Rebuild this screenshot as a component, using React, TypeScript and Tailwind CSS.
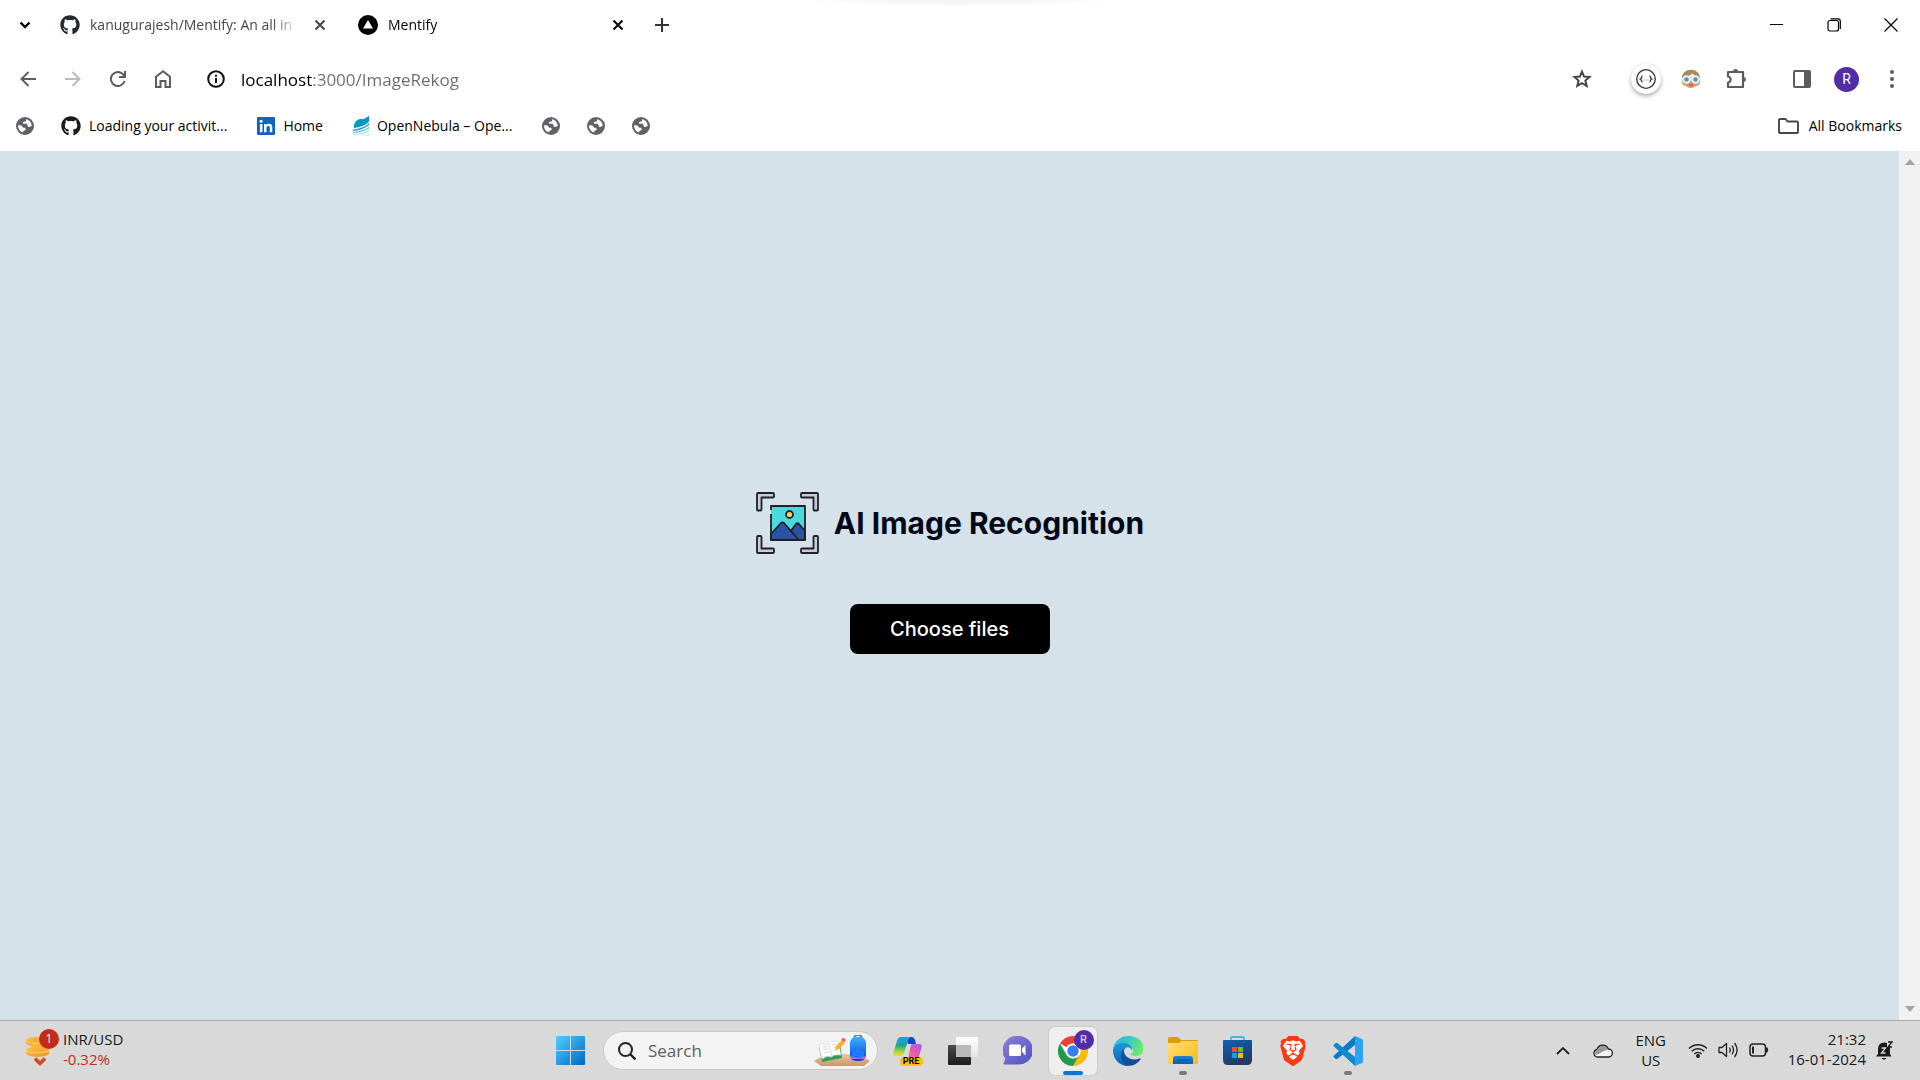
import type { ReactNode } from 'react'
import { FaGithub } from 'react-icons/fa'
import { SiBrave } from 'react-icons/si'

const uiFont = "font-['Segoe_UI','Open_Sans','Noto_Sans',sans-serif]"

function Globe() {
  return (
    <svg viewBox="0 0 18 18" className="size-[18px] shrink-0">
      <circle cx="9" cy="9" r="9" fill="#5f6368" />
      <path
        d="M10.2 2.2c-.4 1 .2 1.7-.7 2.3-1 .5-2.1.1-2.6 1-.4.8.5 1.3 1.4 1.3 1 0 2.3-.2 3 .6.6.8.1 1.9 1 2.3.9.5 1.9 0 3.4-.6.1-3.3-2.3-6.2-5.5-6.9zM2.1 8.3c-.4 3.4 1.8 6.4 5 7.3 0-1 .3-1.6 1.2-2 1-.4 1.6-.9 1.3-1.9-.3-1.1-1.5-.9-2.5-1.2-.9-.4-.8-1.5-1.7-1.9-1-.4-2.1-.3-3.3-.3z"
        fill="#fff"
      />
    </svg>
  )
}

function LinkedIn() {
  return (
    <svg viewBox="0 0 18 18" className="size-[18px] shrink-0">
      <rect width="18" height="18" rx="1" fill="#0a66c2" />
      <circle cx="4.1" cy="4.2" r="1.5" fill="#fff" />
      <path d="M2.9 7h2.5v8.3H2.9zM7 7h2.4v1.2c.5-.9 1.4-1.4 2.6-1.4 2.5 0 3.3 1.5 3.3 3.9v4.6h-2.5v-4.2c0-1.3-.3-2.1-1.5-2.1s-1.8.9-1.8 2.1v4.2H7z" fill="#fff" />
    </svg>
  )
}

function Nebula() {
  return (
    <svg viewBox="0 0 16 20" className="h-5 w-4 shrink-0">
      <path d="M1 9.500C2 5 6 2 10 3.500L16 0v5.500C12 9.500 7 11.500 1 12z" fill="#0098c3" />
      <path d="M0 13.500C6 13 12 11 16 7v2C12 12.500 6 14.600 0 15z" fill="#1fa6cc" />
      <path d="M0 16c6-.2 12-2 16-5v1.600C12 15 6 17 0 17.200z" fill="#5cc1dc" />
      <path d="M0 18c6 0 12-1.400 16-4v1.600C12 17.600 7 18.900 1 19z" fill="#a4dcec" />
      <path d="M6 19.800c4-.3 7-1.100 10-2.600v2.600z" fill="#cdebf5" />
    </svg>
  )
}

function RecognitionIcon() {
  return (
    <svg viewBox="0 0 64 64" className="size-16 shrink-0" fill="none" stroke="#1f2126" strokeWidth="1.800" strokeLinejoin="round">
      <g fill="#c9cbd6">
        <path d="M3 2h15a1 1 0 0 1 1 1v2.500a1 1 0 0 1-1 1H6.500v12a1 1 0 0 1-1 1h-2.500a1 1 0 0 1-1-1V3a1 1 0 0 1 1-1z" />
        <path d="M62 2H47a1 1 0 0 0-1 1v2.500a1 1 0 0 0 1 1h11.500v12a1 1 0 0 0 1 1H62a1 1 0 0 0 1-1V3a1 1 0 0 0-1-1z" />
        <path d="M3 62h15a1 1 0 0 0 1-1v-2.500a1 1 0 0 0-1-1H6.500V46a1 1 0 0 0-1-1H3a1 1 0 0 0-1 1v15a1 1 0 0 0 1 1z" />
        <path d="M62 62H47a1 1 0 0 1-1-1v-2.500a1 1 0 0 1 1-1h11.500V46a1 1 0 0 1 1-1H62a1 1 0 0 1 1 1v15a1 1 0 0 1-1 1z" />
      </g>
      <rect x="16" y="15" width="34" height="34" rx="1" fill="#4cd9dc" stroke="none" />
      <path d="m16 43 10-11q1.500-1.200 3 0l7 8 5-7q1.500-1.500 3 0l6 7v9H16z" fill="#2a52a5" />
      <path d="m35 39 8 9" />
      <path d="M16 19v-4h34v34H16V23" />
      <circle cx="34.500" cy="23.500" r="3.500" fill="#f8d25c" />
    </svg>
  )
}

function IconButton({ label, className = 'w-[45px]', children }: { label: string; className?: string; children: ReactNode }) {
  return (
    <button type="button" aria-label={label} className={`flex h-9 shrink-0 items-center justify-center ${className}`}>
      {children}
    </button>
  )
}

function CloseIcon() {
  return (
    <svg viewBox="0 0 12 12" className="size-3" stroke="currentColor" strokeWidth="2" fill="none">
      <path d="m1.500 1.500 9 9M10.500 1.500l-9 9" />
    </svg>
  )
}

function Tab({ icon, title, active }: { icon: ReactNode; title: string; active?: boolean }) {
  return (
    <div className={`flex w-[298px] items-center pr-[18px] pl-2.5 ${active ? 'text-black' : 'text-[#45474a]'}`}>
      {icon}
      <span className="mr-3 ml-2.5 min-w-0 flex-1 overflow-hidden text-sm leading-5 whitespace-nowrap [mask-image:linear-gradient(90deg,#000_88%,transparent)]">
        {title}
      </span>
      <IconButton label={`Close ${title}`} className="w-5">
        <CloseIcon />
      </IconButton>
    </div>
  )
}

function TabStrip() {
  return (
    <div className="relative flex h-[50px] items-center">
      <div className="absolute inset-x-0 top-0 mx-auto h-1.5 w-[300px] bg-[radial-gradient(ellipse_at_top,#f5f5f5_30%,transparent_75%)]" />
      <IconButton label="Search tabs" className="w-[50px]">
        <svg viewBox="0 0 12 8" className="h-2 w-3" fill="none" stroke="#000" strokeWidth="2.400">
          <path d="m1.500 1.500 4.500 4.500 4.500-4.500" />
        </svg>
      </IconButton>
      <Tab icon={<FaGithub className="size-5 shrink-0 text-[#24292f]" />} title="kanugurajesh/Mentify: An all in" />
      <Tab
        active
        icon={
          <svg viewBox="0 0 20 20" className="size-5 shrink-0">
            <circle cx="10" cy="10" r="10" />
            <path d="m10 5 5 8.500H5z" fill="#fff" />
          </svg>
        }
        title="Mentify"
      />
      <IconButton label="New tab" className="w-8">
        <svg viewBox="0 0 14 14" className="size-3.5" stroke="#333" strokeWidth="2">
          <path d="M7 0v14M0 7h14" />
        </svg>
      </IconButton>
      <div className="ml-auto flex pr-px">
        <IconButton label="Minimize" className="w-[57px]">
          <svg viewBox="0 0 14 14" className="size-3.5" stroke="#000">
            <path d="M0 6.500h13" />
          </svg>
        </IconButton>
        <IconButton label="Restore" className="w-[57px]">
          <svg viewBox="0 0 14 14" className="size-3.5" stroke="#000" strokeWidth="1.200" fill="none">
            <rect x="1" y="2.500" width="10.500" height="10.500" rx="2" />
            <path d="M3.500.8H11a2.300 2.300 0 0 1 2.300 2.300V11" />
          </svg>
        </IconButton>
        <IconButton label="Close" className="w-[57px]">
          <svg viewBox="0 0 14 14" className="size-3.5" stroke="#000" strokeWidth="1.200">
            <path d="m.5.5 13 13M13.500.5l-13 13" />
          </svg>
        </IconButton>
      </div>
    </div>
  )
}

function Toolbar() {
  return (
    <div className="flex h-[58px] items-center pr-1.5 pl-[5px]">
      <IconButton label="Back">
        <svg viewBox="0 0 16 16" className="size-4" fill="none" stroke="#5c5c5c" strokeWidth="1.900">
          <path d="M16 8H2M8.500 1 1.500 8l7 7" />
        </svg>
      </IconButton>
      <IconButton label="Forward">
        <svg viewBox="0 0 16 16" className="size-4" fill="none" stroke="#b9b9b9" strokeWidth="1.900">
          <path d="M0 8h14M7.500 1l7 7-7 7" />
        </svg>
      </IconButton>
      <IconButton label="Reload">
        <svg viewBox="0 0 16 16" className="size-4" fill="none" stroke="#5c5c5c" strokeWidth="2">
          <path d="M14.600 10A7 7 0 1 1 13 3.200L14.500 5M15 0v6H9" />
        </svg>
      </IconButton>
      <IconButton label="Home">
        <svg viewBox="0 0 16 18" className="h-[18px] w-4" fill="none" stroke="#5c5c5c" strokeWidth="2">
          <path d="M1 6.800 8 1.300l7 5.500V17h-4.500v-6h-5v6H1z" />
        </svg>
      </IconButton>
      <IconButton label="Site information" className="ml-4 w-[30px]">
        <svg viewBox="0 0 18 18" className="size-[18px]" fill="none" stroke="#111" strokeWidth="2">
          <circle cx="9" cy="9" r="7.800" />
          <path d="M9 8v5M9 4.800v2" />
        </svg>
      </IconButton>
      <input
        type="text"
        aria-label="Address"
        defaultValue="localhost:3000/ImageRekog"
        className="ml-2.5 h-9 min-w-0 flex-1 bg-[linear-gradient(90deg,#000_71px,#6b6b6b_71px)] bg-clip-text text-[17px] text-transparent outline-none"
      />
      <IconButton label="Bookmark this tab">
        <svg viewBox="0 0 20 20" className="size-5" fill="none" stroke="#474747" strokeWidth="2">
          <path d="m10 2.600 2.100 5 5.400.5-4.100 3.500 1.300 5.300L10 14.100l-4.700 2.800 1.300-5.300-4.100-3.500 5.400-.5z" />
        </svg>
      </IconButton>
      <IconButton label="JSON viewer" className="ml-[19px] w-[45px]">
        <span className="flex size-[30px] items-center justify-center rounded-full bg-white shadow-[0_2px_4px_rgba(0,0,0,0.35)]">
          <svg viewBox="0 0 20 20" className="size-5" fill="none" stroke="#333">
            <circle cx="10" cy="10" r="9.300" strokeWidth="1.300" />
            <path d="M6.500 7c-1.500 0-.5 2.500-2.200 3 1.700.5.700 3 2.200 3M13.500 7c1.500 0 .5 2.500 2.200 3-1.700.5-.7 3-2.200 3" strokeWidth="1.300" />
            <path d="M7.500 11h5" strokeDasharray="1 1" stroke="#888" />
          </svg>
        </span>
      </IconButton>
      <IconButton label="Extension">
        <svg viewBox="0 0 20 20" className="size-5">
          <path d="M1 8h18c.5 3 .5 6-1 8l-3 1q-2 2-5 2t-5-2l-3-1c-1.500-2-1.500-5-1-8z" fill="#dd9468" />
          <path d="M1 9C1 4 5 .8 10 .8S19 4 19 9c-3-1-6-2.500-7.500-4.500C9 7 5 8 1 9z" fill="#a98a5a" />
          <circle cx="5.500" cy="10.500" r="3.300" fill="#5b99aa" stroke="#e4f4fa" strokeWidth="2" />
          <circle cx="14.500" cy="10.500" r="3.300" fill="#5b99aa" stroke="#e4f4fa" strokeWidth="2" />
          <path d="M0 10h2M18 10h2M9 10h2" stroke="#e4f4fa" strokeWidth="2" />
          <path d="M8 16h4" stroke="#b5533f" strokeWidth="1.200" />
        </svg>
      </IconButton>
      <IconButton label="Extensions">
        <svg viewBox="0 0 22 22" className="size-[22px]">
          <path d="M3 4h15v15H3v-4.500c3.500-.4 3.500-5.600 0-6z" fill="none" stroke="#5c5c5c" strokeWidth="2.200" strokeLinejoin="round" />
          <path d="M8 3.500a2.500 2.500 0 0 1 5 0zM18.500 9a2.500 2.500 0 0 1 0 5z" fill="#5c5c5c" />
        </svg>
      </IconButton>
      <IconButton label="Side panel" className="ml-[21px] w-[45px]">
        <svg viewBox="0 0 18 18" className="size-[18px]">
          <rect x="1" y="1" width="16" height="16" rx="1" fill="none" stroke="#5c5c5c" strokeWidth="2" />
          <path d="M11 1h6v16h-6z" fill="#5c5c5c" />
        </svg>
      </IconButton>
      <IconButton label="Profile">
        <span className="flex size-[25px] items-center justify-center rounded-full bg-[#512da8] font-[Roboto,sans-serif] text-sm text-white">R</span>
      </IconButton>
      <IconButton label="Menu">
        <svg viewBox="0 0 4 18" className="h-[18px] w-1" fill="#5c5c5c">
          <circle cx="2" cy="2" r="2" />
          <circle cx="2" cy="9" r="2" />
          <circle cx="2" cy="16" r="2" />
        </svg>
      </IconButton>
    </div>
  )
}

function Bookmark({ icon, label, children }: { icon: ReactNode; label?: string; children?: ReactNode }) {
  return (
    <a href="#" aria-label={label} className={`flex items-center gap-2 whitespace-nowrap text-black ${children ? 'pr-[3px]' : ''}`}>
      {icon}
      {children}
    </a>
  )
}

function BookmarksBar() {
  return (
    <nav aria-label="Bookmarks" className="flex h-[43px] items-center gap-[27px] pr-[18px] pb-[7px] pl-4 text-sm leading-5">
      <Bookmark icon={<Globe />} label="Bookmark" />
      <Bookmark icon={<FaGithub className="size-5 shrink-0 text-[#1b1b1b]" />}>Loading your activit...</Bookmark>
      <Bookmark icon={<LinkedIn />}>Home</Bookmark>
      <Bookmark icon={<Nebula />}>OpenNebula – Ope...</Bookmark>
      <Bookmark icon={<Globe />} label="Bookmark" />
      <Bookmark icon={<Globe />} label="Bookmark" />
      <Bookmark icon={<Globe />} label="Bookmark" />
      <button type="button" className="ml-auto flex items-center gap-2.5 text-black">
        <svg viewBox="0 0 21 16" className="h-4 w-[21px]" fill="none" stroke="#474747" strokeWidth="1.900" strokeLinejoin="round">
          <path d="M1 2a1 1 0 0 1 1-1h5.500l2 2.500H19a1 1 0 0 1 1 1V14a1 1 0 0 1-1 1H2a1 1 0 0 1-1-1z" />
        </svg>
        All Bookmarks
      </button>
    </nav>
  )
}

function Page() {
  return (
    <div className="flex min-h-0 flex-1 bg-[#d5e2ea]">
      <main className="flex flex-1 flex-col items-center justify-center gap-[49px] pb-[26px] font-[Inter,sans-serif]">
        <div className="flex items-center gap-[15px]">
          <RecognitionIcon />
          <h1 className="text-[30px] leading-10 font-bold text-[#020817]">AI Image Recognition</h1>
        </div>
        <button type="button" className="h-[50px] w-[200px] rounded-lg bg-black text-xl font-medium text-white">
          Choose files
        </button>
      </main>
      <div className="flex w-[21px] flex-col items-center justify-between bg-[#f1f1f1] py-2">
        <svg viewBox="0 0 10 6" className="h-1.5 w-2.5" fill="#a3a3a3">
          <path d="m0 6 5-6 5 6z" />
        </svg>
        <svg viewBox="0 0 10 6" className="h-1.5 w-2.5" fill="#a3a3a3">
          <path d="m0 0 5 6 5-6z" />
        </svg>
      </div>
    </div>
  )
}

function TaskbarApp({ label, running, active, children }: { label: string; running?: boolean; active?: boolean; children: ReactNode }) {
  return (
    <button type="button" aria-label={label} className="flex w-[55px] justify-center">
      <span className={`relative flex size-12 items-center justify-center rounded-md ${active ? 'bg-[#eeeeee] shadow-[0_0_1px_1px_rgba(0,0,0,0.06)]' : ''}`}>
        {children}
        {active && <span className="absolute bottom-0 h-1 w-5 rounded-full bg-[#0078d4]" />}
        {running && <span className="absolute bottom-0 h-1 w-2 rounded-full bg-[#7a7a7a]" />}
      </span>
    </button>
  )
}

function Gradient({ id, from, to, x2 = 1, y2 = 1 }: { id: string; from: string; to: string; x2?: number; y2?: number }) {
  return (
    <linearGradient id={id} x1="0" y1="0" x2={x2} y2={y2}>
      <stop stopColor={from} />
      <stop offset="1" stopColor={to} />
    </linearGradient>
  )
}

function WindowsLogo() {
  return (
    <svg viewBox="0 0 29 29" className="size-[29px]">
      <defs>
        <linearGradient id="win" gradientUnits="userSpaceOnUse" x1="0" y1="0" x2="29" y2="29">
          <stop stopColor="#4fd0ff" />
          <stop offset="1" stopColor="#0067c7" />
        </linearGradient>
      </defs>
      <path d="M1 0h13v14H0V1a1 1 0 0 1 1-1zM15 0h13a1 1 0 0 1 1 1v13H15zM0 15h14v14H1a1 1 0 0 1-1-1zM15 15h14v13a1 1 0 0 1-1 1H15z" fill="url(#win)" />
    </svg>
  )
}

function SearchArt() {
  return (
    <svg viewBox="0 0 58 32" className="h-8 w-[58px] shrink-0">
      <defs>
        <Gradient id="bag" from="#35b4ff" to="#0a3fd8" x2={0} />
        <Gradient id="desk" from="#e9c79c" to="#c9986a" x2={0} />
      </defs>
      <path d="M1 26c4-3 12-7 28-7s24 4 28 7l-6 5H8z" fill="url(#desk)" />
      <path d="m6 12 3 15 20-4-2-15z" fill="#2f9e57" />
      <path d="M6 11q5-4 9-1 4-5 10-4l3 14q-7-1-10 2-4-2-9 2z" fill="#fff" stroke="#d6d3e6" strokeWidth=".6" />
      <path d="m16 10 3 12M9 12l5-1M10 15l5-1M11 18l5-1M19 10l5-1M20 13l5-1M20 16l5-1" stroke="#cfccdd" strokeWidth=".8" />
      <path d="m22 15 1-4 6-6 3 3-6 6z" fill="#ffb321" />
      <path d="m28 5 2.500-2.500 2.500 2.500-2 2z" fill="#ef5b5b" />
      <path d="M41 4q0-4 4-4t4 4" fill="none" stroke="#1479e6" strokeWidth="1.600" />
      <rect x="37" y="2" width="16" height="24" rx="6" fill="url(#bag)" />
      <path d="M39 17q6-5 12 0v6H39z" fill="#1c7bff" />
      <path d="M38 21q7 4 14 0v3H38z" fill="#9d6bf5" />
    </svg>
  )
}

function Copilot() {
  return (
    <span className="relative flex size-[30px]">
      <svg viewBox="0 0 30 30" className="size-[30px]">
        <defs>
          <linearGradient id="cpA" x1="0" y1="0" x2="0" y2="1">
            <stop stopColor="#1f9bf0" />
            <stop offset=".45" stopColor="#19a88d" />
            <stop offset=".75" stopColor="#9bd63c" />
            <stop offset="1" stopColor="#ffd23c" />
          </linearGradient>
          <linearGradient id="cpB" x1="1" y1="0" x2="0" y2="1">
            <stop stopColor="#a259ff" />
            <stop offset=".5" stopColor="#e85aa0" />
            <stop offset="1" stopColor="#ff9a52" />
          </linearGradient>
        </defs>
        <path d="M12 1h7q2 0 3 3l1 4h-8z" fill="#1246c8" />
        <path d="M8 1h11c-3 0-4 3-5 7l-3 9q-1 3-4 3H3c-3 0-3-2-2-5L4 5q1-4 4-4z" fill="url(#cpA)" />
        <path d="M19 8h7c3 0 3 2 2.500 4L26 20q-1 5-5 5H11c3 0 4-3 5-7l1-5q1-5 2-5z" fill="url(#cpB)" />
      </svg>
      <span className="absolute right-0 bottom-0 flex h-[9px] w-[23px] items-center justify-center rounded-sm bg-[#ffc400] font-[Roboto,sans-serif] text-[9px] leading-none font-bold text-black">
        PRE
      </span>
    </span>
  )
}

function Chrome() {
  return (
    <svg viewBox="0 0 30 30" className="size-[30px]">
      <circle cx="15" cy="15" r="15" fill="#fff" />
      <path d="M15 0a15 15 0 0 1 13 7.500H15a7.500 7.500 0 0 0-6.500 3.750L2 7.500A15 15 0 0 1 15 0z" fill="#ea4335" />
      <path d="M28 7.500A15 15 0 0 1 15 30l6.500-11.250A7.500 7.500 0 0 0 21.500 11.250L19 7.500z" fill="#fbbc04" />
      <path d="M15 30A15 15 0 0 1 2 7.500l6.500 11.250A7.500 7.500 0 0 0 21.500 18.750z" fill="#229a4b" />
      <circle cx="15" cy="15" r="7.200" fill="#fff" />
      <circle cx="15" cy="15" r="5.700" fill="#3b7ded" />
    </svg>
  )
}

function Edge() {
  return (
    <svg viewBox="0 0 256 256" className="size-[30px]">
      <defs>
        <Gradient id="edA" from="#0c59a4" to="#114a8b" />
        <Gradient id="edB" from="#1b9de2" to="#0b5fb0" x2={0} />
        <linearGradient id="edC" x1="0" y1="0" x2="1" y2=".4">
          <stop stopColor="#2fb5e8" />
          <stop offset=".5" stopColor="#35c8c4" />
          <stop offset="1" stopColor="#66eb6e" />
        </linearGradient>
      </defs>
      <path d="M231 190a94 94 0 0 1-11 5 102 102 0 0 1-36 6c-48 0-90-33-90-75a32 32 0 0 1 17-28c-43 2-54 47-54 74 0 75 69 82 84 82 8 0 20-2 28-4l1-1a128 128 0 0 0 66-53 4 4 0 0 0-5-6z" fill="url(#edA)" />
      <path d="M106 241a79 79 0 0 1-23-21 81 81 0 0 1 30-121c3-2 8-4 15-4a32 32 0 0 1 25 13 32 32 0 0 1 6 19c0 0 25-80-80-80C35 47 0 88 0 126a130 130 0 0 0 12 56 128 128 0 0 0 157 67 75 75 0 0 1-63-8z" fill="url(#edB)" />
      <path d="M152 149c-1 1-3 3-3 6 0 3 2 6 5 8 15 11 44 9 44 9a63 63 0 0 0 32-9 65 65 0 0 0 32-56c0-24-8-39-12-45C229 20 180 0 128 0A128 128 0 0 0 0 126c0-38 39-69 85-69 4 0 25 0 45 11a78 78 0 0 1 32 31c7 11 8 26 8 32s-3 14-9 20z" fill="url(#edC)" />
    </svg>
  )
}

function Taskbar() {
  return (
    <footer className="flex h-[60px] shrink-0 items-center border-t border-[#a9a9a9] bg-[#d9d9d9] text-[15px] leading-5 text-[#1a1a1a]">
      <div className="flex min-w-0 flex-1 items-center pb-1 pl-[25px]">
        <button type="button" className="flex items-center gap-1 text-left">
          <span className="relative block h-9 w-[34px]">
            <svg viewBox="0 0 34 36" className="h-9 w-[34px]">
              <defs>
                <Gradient id="coin" from="#ffc24a" to="#f2901d" />
              </defs>
              <g fill="url(#coin)">
                <path d="M1 9c0-4 21-4 21 0v3c0 4-21 4-21 0z" />
                <path d="M6 14c0-3 17-3 17 0v3c0 4-17 4-17 0z" />
                <path d="M1 19c0-4 23-4 23 0v3c0 5-23 5-23 0z" />
              </g>
              <path d="M1 9.500c3 3 17 4 21 1M1 19.500c3 3 19 3 23 0" fill="none" stroke="#ffd77a" />
              <path d="m10 27.500 5 5 5-5" fill="none" stroke="#d2481b" strokeWidth="3.600" />
            </svg>
            <span className="absolute -top-0.5 right-0 flex size-5 items-center justify-center rounded-full bg-[#c42b1c] text-xs text-white">1</span>
          </span>
          <span>
            <span className="block">INR/USD</span>
            <span className="block text-[#c42b1c]">-0.32%</span>
          </span>
        </button>
      </div>

      <div className="flex shrink-0 items-center">
        <TaskbarApp label="Start">
          <WindowsLogo />
        </TaskbarApp>
        <label className="mr-0.5 ml-[5px] flex h-[39px] w-[275px] items-center rounded-full border border-[#c8c8c8] bg-[#f3f3f3] pr-1.5 pl-3.5">
          <svg viewBox="0 0 18 18" className="size-[18px] shrink-0" fill="none" stroke="#222" strokeWidth="2">
            <circle cx="7.500" cy="7.500" r="6.500" />
            <path d="m12 12 5.500 5.500" strokeWidth="2.400" />
          </svg>
          <input type="text" placeholder="Search" aria-label="Search" className="ml-3 min-w-0 flex-1 bg-transparent text-[17px] leading-6 outline-none placeholder:text-[#5f5f5f]" />
          <SearchArt />
        </label>
        <TaskbarApp label="Copilot">
          <Copilot />
        </TaskbarApp>
        <TaskbarApp label="Task view">
          <svg viewBox="0 0 30 28" className="h-7 w-[30px]">
            <defs>
              <Gradient id="tvA" from="#4a4a4a" to="#1c1c1c" x2={0} />
              <Gradient id="tvB" from="#ffffff" to="#e4e4e4" x2={0} />
            </defs>
            <rect y="8" width="23" height="20" rx="1" fill="url(#tvA)" />
            <rect x="8" width="22" height="20" rx="1" fill="url(#tvB)" />
            <path d="M8 8h15v12H8z" fill="#b9b9b9" />
          </svg>
        </TaskbarApp>
        <TaskbarApp label="Chat">
          <svg viewBox="0 0 29 29" className="size-[29px]">
            <defs>
              <Gradient id="chat" from="#8b7fd6" to="#4f52c4" />
            </defs>
            <path d="M14.500 0a14.300 14.300 0 1 1 0 28.500H1.500c-1.500 0-1.200-1-.6-2l1.300-4A14.300 14.300 0 0 1 14.500 0z" fill="url(#chat)" />
            <rect x="6" y="8.500" width="12" height="11.500" rx="1.500" fill="#fff" />
            <path d="m19 12.500 3.500-3.500v10.500L19 16z" fill="#fff" />
          </svg>
        </TaskbarApp>
        <TaskbarApp label="Chrome" active>
          <Chrome />
          <span className="absolute top-[3px] right-[3px] flex size-5 items-center justify-center rounded-full bg-[#512da8] font-[Roboto,sans-serif] text-[11px] leading-none font-medium text-[#d8c8f5]">R</span>
        </TaskbarApp>
        <TaskbarApp label="Edge">
          <Edge />
        </TaskbarApp>
        <TaskbarApp label="File Explorer" running>
          <svg viewBox="0 0 30 27" className="h-[27px] w-[30px]">
            <defs>
              <Gradient id="fld" from="#ffe07a" to="#f9b916" />
              <Gradient id="tray" from="#1a86d9" to="#0a5fae" x2={0} />
            </defs>
            <path d="M0 1.500Q0 0 1.500 0H10l3 3h16q1 0 1 1v5H0z" fill="#dd9c0c" />
            <path d="M0 6h11l3-2h16v22a1 1 0 0 1-1 1H1a1 1 0 0 1-1-1z" fill="url(#fld)" />
            <path d="M5 27v-5q0-3 3-3h14q3 0 3 3v5z" fill="url(#tray)" />
            <path d="M9 23h12" stroke="#0a4a8a" />
          </svg>
        </TaskbarApp>
        <TaskbarApp label="Microsoft Store">
          <svg viewBox="0 0 29 29" className="size-[29px]">
            <defs>
              <Gradient id="shop" from="#0d62b4" to="#223a68" x2={0.4} />
            </defs>
            <path d="M8 6V1.800Q8 1 9 1h11q1 0 1 .8V6" fill="none" stroke="#3fb8f0" strokeWidth="1.800" />
            <path d="M0 5q0-1 1-1h27q1 0 1 1v19q0 5-5 5H5q-5 0-5-5z" fill="url(#shop)" />
            <path d="M9 11h5v5H9z" fill="#f25022" />
            <path d="M15 11h5v5h-5z" fill="#7fba00" />
            <path d="M9 17h5v5H9z" fill="#00a4ef" />
            <path d="M15 17h5v5h-5z" fill="#ffb900" />
          </svg>
        </TaskbarApp>
        <TaskbarApp label="Brave">
          <span className="relative flex">
            <svg viewBox="0 0 30 30" className="size-[30px]">
              <path d="m7 5 8-1 8 1 3 7-4 10-7 6-7-6-4-10z" fill="#fff" />
            </svg>
            <SiBrave className="absolute inset-0 size-[30px] text-[#fb3a12]" />
          </span>
        </TaskbarApp>
        <TaskbarApp label="Visual Studio Code" running>
          <svg viewBox="0 0 30 30" className="size-[30px]">
            <path d="M22 0 1 19.500q-1 1 0 2l1.500 1.300q1 .7 2 0L22 9z" fill="#0a7ac4" />
            <path d="M22 30 1 10.500q-1-1 0-2l1.500-1.300q1-.7 2 0L22 21z" fill="#1089d3" />
            <path d="M22 0l7 3q1 .5 1 1.500v21q0 1-1 1.500l-7 3z" fill="#2aa3f2" />
          </svg>
        </TaskbarApp>
      </div>

      <div className="flex min-w-0 flex-1 items-center justify-end pr-[27px]">
        <IconButton label="Show hidden icons" className="w-[30px]">
          <svg viewBox="0 0 14 8" className="h-2 w-3.5" fill="none" stroke="#222" strokeWidth="1.800">
            <path d="m1 7 6-6 6 6" />
          </svg>
        </IconButton>
        <IconButton label="OneDrive" className="ml-2.5 w-[30px]">
          <svg viewBox="0 0 20 14" className="h-3.5 w-5" stroke="#222">
            <path d="M4.500 13A3.800 3.800 0 0 1 4 5.500 6 6 0 0 1 15.300 5a4 4 0 0 1 .2 8z" fill="#f4f4f4" strokeWidth="1.300" />
            <path d="M1.500 8Q3 5.500 5 5.500 7 1 11 2q3 .5 4 4-3 0-6 2-3 2-6 3z" fill="#999" stroke="none" />
          </svg>
        </IconButton>
        <button type="button" className="ml-2.5 w-[46px] pb-0.5 text-center">
          ENG
          <br />
          US
        </button>
        <button type="button" aria-label="Network, volume and battery" className="ml-[14px] flex items-center gap-2.5 pb-0.5">
          <svg viewBox="0 0 20 16" className="h-4 w-5" fill="none" stroke="#222" strokeWidth="1.400">
            <path d="M1 6.500a12.700 12.700 0 0 1 18 0M3.700 9.300a9 9 0 0 1 12.600 0M6.300 12a5.300 5.300 0 0 1 7.400 0" />
            <circle cx="10" cy="14" r="1.300" fill="#222" />
          </svg>
          <svg viewBox="0 0 21 16" className="h-4 w-[21px]" fill="none" stroke="#222" strokeWidth="1.300" strokeLinejoin="round">
            <path d="M1 5.500h3L8.500 1.500v13L4 10.500H1zM11.500 5.500q1.600 2.500 0 5M14 3.500q3 4.500 0 9M16.600 1q5 7 0 14" />
          </svg>
          <svg viewBox="0 0 20 14" className="h-3.5 w-5" fill="none" stroke="#222" strokeWidth="1.500">
            <rect x="1" y="1" width="15.500" height="12" rx="3" />
            <path d="M3 3.500h2v7H3z" fill="#222" stroke="none" />
            <path d="M17 4.500h1.500q1.500 2.500 0 5H17z" fill="#222" stroke="none" />
          </svg>
        </button>
        <button type="button" className="ml-[19px] pb-1 text-right whitespace-nowrap">
          21:32
          <br />
          16-01-2024
        </button>
        <IconButton label="Notifications" className="ml-2.5 w-[17px]">
          <svg viewBox="0 0 17 20" className="h-5 w-[17px]" fill="#1a1a1a">
            <path d="M2 8q0-6.500 6.500-6.500 1.500 0 2.500.5v4h3v7l1.500 2.500H0L2 13zM5.500 17h5q-2.500 3.500-5 0z" />
            <path d="M5.500 7h4l-4 5h4" fill="none" stroke="#d9d9d9" strokeWidth="1.300" />
            <path d="M12 1h4l-4 5h4" fill="none" stroke="#1a1a1a" strokeWidth="1.300" />
          </svg>
        </IconButton>
      </div>
    </footer>
  )
}

export default function App() {
  return (
    <div className={`flex h-screen flex-col overflow-hidden bg-white ${uiFont}`}>
      <header className="shrink-0">
        <TabStrip />
        <Toolbar />
        <BookmarksBar />
      </header>
      <Page />
      <Taskbar />
    </div>
  )
}
